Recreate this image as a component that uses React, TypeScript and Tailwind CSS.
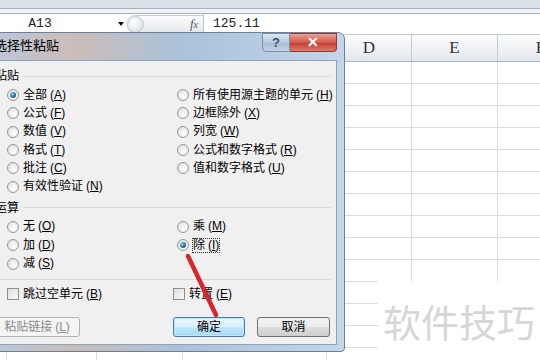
import React from "react";

const FONT = { fontFamily: '"Liberation Sans", "Noto Sans CJK SC", sans-serif' };

// only D, E, F show beside the dialog
const cols = [
  { w: 7, label: "" },
  { w: 90, label: "" },
  { w: 86, label: "" },
  { w: 144, label: "" },
  { w: 85, label: "D" },
  { w: 86, label: "E" },
  { w: 86, label: "F" },
];

function Acc({ k }: { k: string }) {
  return (
    <span className="ml-[3px]">
      (<span className="underline underline-offset-1">{k}</span>)
    </span>
  );
}

function Radio({ checked }: { checked?: boolean }) {
  return (
    <span className="flex h-[12px] w-[12px] shrink-0 items-center justify-center rounded-full border border-[#979797] bg-[radial-gradient(circle_at_60%_65%,#ffffff,#dadada)]">
      {checked && (
        <span className="h-[6px] w-[6px] rounded-full bg-[radial-gradient(circle_at_35%_35%,#8ad8ee,#1d7397_55%,#0c3a54)]" />
      )}
    </span>
  );
}

function Check() {
  return (
    <span className="h-[12px] w-[12px] shrink-0 border border-[#8e8f8f] bg-[linear-gradient(135deg,#dcdcdc,#fbfbfb)]" />
  );
}

function Opt({ label, k, checked, focus }: { label: string; k: string; checked?: boolean; focus?: boolean }) {
  return (
    <div className="flex h-[18.3px] items-center gap-[4px]">
      <Radio checked={checked} />
      <span className={focus ? "leading-[13px] outline-1 outline-dotted outline-[#333]" : "leading-[13px]"}>
        {label}
        <Acc k={k} />
      </span>
    </div>
  );
}

function GroupHead({ title }: { title: string }) {
  return (
    <div className="flex h-[12px] items-center gap-[4px] pl-[6px] pr-[5px]">
      <span className="leading-[12px]">{title}</span>
      <div className="h-px flex-1 bg-[#dadada]" />
    </div>
  );
}

function Btn({ children, w, kind }: { children: React.ReactNode; w: string; kind?: "default" | "disabled" }) {
  const base = "flex h-[20px] items-center justify-center rounded-[3px] border text-[12px] leading-none";
  const style =
    kind === "default"
      ? "border-[#3c7fb1] bg-[linear-gradient(#eaf6fd,#d9f0fc_50%,#bee6fd_51%,#a7d9f5)] shadow-[inset_0_0_0_1px_#c6e7fb]"
      : kind === "disabled"
      ? "border-[#adb2b5] bg-[#f4f4f4] text-[#8a8a8a]"
      : "border-[#707070] bg-[linear-gradient(#f2f2f2,#ebebeb_50%,#dddddd_51%,#cfcfcf)]";
  return <div className={`${base} ${style} ${w}`}>{children}</div>;
}

export default function App() {
  return (
    <div className="relative h-[360px] w-[540px] overflow-hidden bg-white text-[12px] text-black" style={FONT}>
      {/* ribbon edge */}
      <div className="h-[8px] bg-[#dbe1e8]" />
      <div className="h-[6px] border-y border-[#a9b0b9] bg-[#eef1f5]" />

      {/* formula bar */}
      <div className="flex h-[21px] items-center border-b border-[#c3c9d1] bg-white">
        <div className="flex w-[126px] items-center">
          <span className="w-[80px] text-center text-[13px] text-[#222]" style={{ fontFamily: '"Liberation Mono", monospace' }}>
            A13
          </span>
          <span className="ml-[38px] h-0 w-0 border-x-[3px] border-t-[4px] border-x-transparent border-t-[#111]" />
        </div>
        <div className="flex h-[18px] w-[77px] items-center rounded-l-full border-y border-[#c8ccd2] bg-[linear-gradient(#fafbfc,#e6e9ed)]">
          <span className="ml-[1px] h-[17px] w-[17px] rounded-full border border-[#c2c6cc] bg-[radial-gradient(circle_at_40%_35%,#ffffff,#d4d7db)]" />
          <span className="ml-auto mr-[5px] text-[13px] italic text-[#555]" style={{ fontFamily: '"Liberation Serif", serif' }}>
            f<span className="text-[10px]">x</span>
          </span>
        </div>
        <div className="h-[20px] w-px bg-[#c0c6ce]" />
        <span className="ml-[9px] text-[13px] text-[#222]" style={{ fontFamily: '"Liberation Mono", monospace' }}>
          125.11
        </span>
      </div>

      {/* sheet */}
      <div className="flex h-[27px] border-b border-[#9eb6ce]">
        {cols.map((c, i) => (
          <div
            key={i}
            className="flex shrink-0 items-center justify-center border-r border-[#c5cbd3] bg-[linear-gradient(#fbfcfd,#e3e7ec)] text-[17px] text-[#333]"
            style={{ width: c.w, fontFamily: '"Liberation Serif", serif' }}
          >
            {c.label}
          </div>
        ))}
      </div>
      {Array.from({ length: 14 }).map((_, r) => (
        <div key={r} className="flex h-[22px] border-b border-[#d9dbdd]">
          {cols.map((c, i) => (
            <div key={i} className="shrink-0 border-r border-[#d9dbdd]" style={{ width: c.w }} />
          ))}
        </div>
      ))}

      {/* watermark */}
      <div className="absolute left-[378px] top-[281px] flex h-[79px] w-[162px] items-center bg-white pl-[5px]">
        <span className="text-[38px] leading-none text-[#d6d6d6]" style={{ fontFamily: '"Noto Sans CJK SC", sans-serif' }}>
          软件技巧
        </span>
      </div>

      {/* dialog */}
      <div className="absolute left-[-20px] top-[32px] flex h-[320px] w-[365px] flex-col rounded-tr-[7px] rounded-br-[4px] border border-[#6b819a] bg-[linear-gradient(90deg,#b8c9da,#cbbdb9_25%,#aac2da_55%,#c3d6ea)]">
        <div className="flex h-[27px] items-start">
          <span className="ml-[13px] mt-[6px] text-[13px] leading-[13px]">选择性粘贴</span>
          <div className="ml-auto mr-[7px] flex h-[19px]">
            <div className="flex w-[28px] items-center justify-center rounded-bl-[4px] border border-[#7b8ea3] bg-[linear-gradient(#dbe6f1,#b7c9dc_50%,#a8bcd2_51%,#c0d3e6)] text-[13px] font-bold text-[#3d4e63]">
              ?
            </div>
            <div className="flex w-[47px] items-center justify-center rounded-br-[4px] border border-l-0 border-[#8e3a35] bg-[linear-gradient(#e8a395,#d4574a_50%,#c23b2e_51%,#dc7a6b)] text-[14px] font-bold text-white">
              ✕
            </div>
          </div>
        </div>
        <div className="mx-[7px] h-[285px] border border-[#8da2b8] bg-[#f0f0f0]">
          <div className="mt-[9px]">
            <GroupHead title="粘贴" />
          </div>
          <div className="mt-[4px] grid grid-cols-[170px_1fr] pl-[18px]">
            <Opt label="全部" k="A" checked />
            <Opt label="所有使用源主题的单元" k="H" />
            <Opt label="公式" k="F" />
            <Opt label="边框除外" k="X" />
            <Opt label="数值" k="V" />
            <Opt label="列宽" k="W" />
            <Opt label="格式" k="T" />
            <Opt label="公式和数字格式" k="R" />
            <Opt label="批注" k="C" />
            <Opt label="值和数字格式" k="U" />
            <Opt label="有效性验证" k="N" />
          </div>
          <div className="mt-[6px]">
            <GroupHead title="运算" />
          </div>
          <div className="mt-[4px] grid grid-cols-[170px_1fr] pl-[18px]">
            <Opt label="无" k="O" />
            <Opt label="乘" k="M" />
            <Opt label="加" k="D" />
            <Opt label="除" k="I" checked focus />
            <Opt label="减" k="S" />
          </div>
          <div className="mx-[5px] mt-[6px] h-px bg-[#dadada]" />
          <div className="mt-[5px] grid h-[18px] grid-cols-[166px_1fr] items-center pl-[18px]">
            <div className="flex items-center gap-[4px]">
              <Check />
              <span>
                跳过空单元
                <Acc k="B" />
              </span>
            </div>
            <div className="flex items-center gap-[4px]">
              <Check />
              <span>
                转置
                <Acc k="E" />
              </span>
            </div>
          </div>
          <div className="mt-[14px] flex items-center justify-between pl-[5px] pr-[6px]">
            <Btn w="w-[86px]" kind="disabled">
              粘贴链接
              <Acc k="L" />
            </Btn>
            <div className="flex gap-[12px]">
              <Btn w="w-[72px]" kind="default">
                确定
              </Btn>
              <Btn w="w-[73px]">取消</Btn>
            </div>
          </div>
        </div>
      </div>

      {/* red annotation stroke */}
      <svg className="absolute left-0 top-0" width="540" height="360">
        <path d="M188 256 L216 315" stroke="#d7262c" strokeWidth="4.5" strokeLinecap="round" />
      </svg>
    </div>
  );
}
